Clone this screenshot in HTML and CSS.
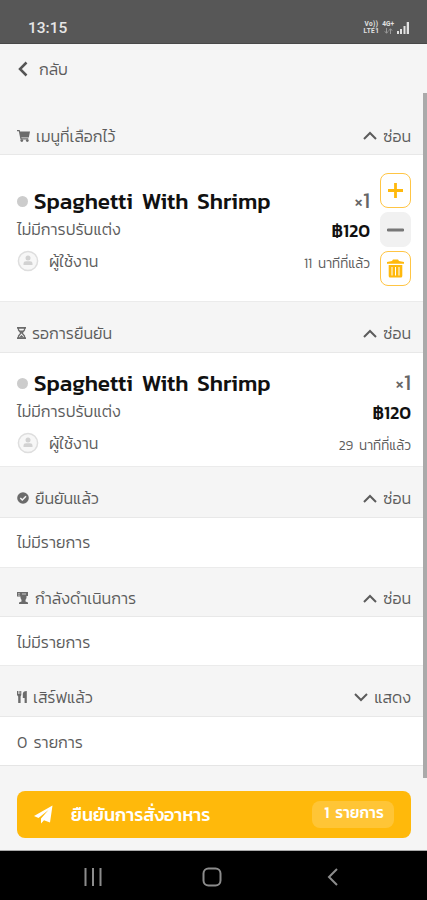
FILE: index.html
```html
<!DOCTYPE html>
<html lang="th">
<head>
<meta charset="utf-8">
<title>รายการอาหาร</title>
<link rel="stylesheet" href="styles.css">
</head>
<body>
<svg class="defs" aria-hidden="true">
  <symbol id="up" viewBox="0 0 14 9"><path d="M1 8 7 2l6 6" fill="none" stroke="currentColor" stroke-width="2"/></symbol>
  <symbol id="down" viewBox="0 0 14 9"><path d="m1 1 6 6 6-6" fill="none" stroke="currentColor" stroke-width="2"/></symbol>
  <symbol id="user" viewBox="0 0 22 22"><circle cx="11" cy="11" r="9.6" fill="#f7f7f7" stroke="#dedede" stroke-width="1.5"/><circle cx="11" cy="8" r="2.5" fill="#d2d2d2"/><path d="M6.5 15v-1.2c0-1.7 1-2.5 2.5-2.5h4c1.500 0 2.500.8 2.500 2.500V15z" fill="#d2d2d2"/></symbol>
</svg>
<div class="status">
  <span class="clock">13:15</span>
  <div class="signals">
    <span class="net volte"><b>Vo))</b><b>LTE1</b></span>
    <span class="net lte"><b>4G+</b><svg width="9" height="6" viewBox="0 0 9 6"><path d="M2.500 0v5M.8 3.300l1.700 2 1.700-2M6.500 6V1M4.800 2.700l1.700-2 1.700 2" fill="none" stroke="#999"/></svg></span>
    <svg width="12" height="12" viewBox="0 0 12 12"><path d="M0 12V9h2v3zM3 12V7h2v5zM6.500 12V4h2v8zM9.700 12V0H12v12z" fill="#e2e2e2"/></svg>
  </div>
</div>
<main class="page">
  <nav class="back">
    <svg width="11" height="16" viewBox="0 0 11 16"><path d="M9.500 1.500 3 8l6.500 6.500" fill="none" stroke="#555" stroke-width="2.500"/></svg>
    <span class="t-back">กลับ</span>
  </nav>

  <header class="head first">
    <svg class="ic" width="13" height="12" viewBox="0 0 13 12"><path d="M0 0h2.700l.4 1.500H13L11.800 7.500H4.300l.3.800h6.700v1.200H3.500L1.800 1.200H0z"/><circle cx="4.800" cy="10.600" r="1.400"/><circle cx="10.300" cy="10.600" r="1.400"/></svg>
    <span class="t-cart">เมนูที่เลือกไว้</span>
    <span class="toggle"><svg width="14" height="9"><use href="#up"/></svg><span class="t-hide">ซ่อน</span></span>
  </header>
  <section class="item editable">
    <div class="info">
      <div class="row name"><i class="dot"></i><h2>Spaghetti With Shrimp</h2><span class="qty"><small>×</small>1</span></div>
      <div class="row mid"><span class="t-mod">ไม่มีการปรับแต่ง</span><b class="price">฿120</b></div>
      <div class="row who"><svg width="22" height="22"><use href="#user"/></svg><span class="t-user">ผู้ใช้งาน</span><span class="ago t-ago1">11 นาทีที่แล้ว</span></div>
    </div>
    <div class="actions">
      <button><svg width="17" height="17" viewBox="0 0 17 17"><path d="M8.500 1v15M1 8.500h15" stroke="#ffb90d" stroke-width="2.800"/></svg></button>
      <button class="minus"><svg width="17" height="4" viewBox="0 0 17 4"><path d="M1 2h15" stroke="#777" stroke-width="2.800" stroke-linecap="round"/></svg></button>
      <button><svg width="17" height="19" viewBox="0 0 17 19"><path d="M0 3 5 2l1-1.500h5L12 2l5 1v1.800H0zM1.700 6h13.600v11q0 1.500-1.500 1.500H3.200Q1.700 18.500 1.700 17z" fill="#ffb90d"/><path d="M5 8v8.500M8.500 8v8.500M12 8v8.500" stroke="#fff" stroke-width="1"/></svg></button>
    </div>
  </section>

  <header class="head wait">
    <svg class="ic" width="9" height="12" viewBox="0 0 9 12"><path d="M0 0h9v1.700H0zM0 10.300h9V12H0z"/><path d="M1.500 1v2L4 6 1.500 9v2M7.500 1v2L5 6l2.500 3v2" fill="none" stroke="currentColor" stroke-width="1.300"/><path d="M2 3.500h5L4.500 6zM2 10.500 4.500 8 7 10.500z"/></svg>
    <span class="t-wait">รอการยืนยัน</span>
    <span class="toggle"><svg width="14" height="9"><use href="#up"/></svg><span class="t-hide">ซ่อน</span></span>
  </header>
  <section class="item">
    <div class="info">
      <div class="row name"><i class="dot"></i><h2>Spaghetti With Shrimp</h2><span class="qty"><small>×</small>1</span></div>
      <div class="row mid"><span class="t-mod">ไม่มีการปรับแต่ง</span><b class="price">฿120</b></div>
      <div class="row who"><svg width="22" height="22"><use href="#user"/></svg><span class="t-user">ผู้ใช้งาน</span><span class="ago t-ago2">29 นาทีที่แล้ว</span></div>
    </div>
  </section>

  <header class="head ok">
    <svg class="ic" width="12" height="12" viewBox="0 0 12 12"><circle cx="6" cy="6" r="5.800"/><path d="m3.300 6 2 2 3.700-3.700" fill="none" stroke="#f5f5f5" stroke-width="1.500"/></svg>
    <span class="t-ok">ยืนยันแล้ว</span>
    <span class="toggle"><svg width="14" height="9"><use href="#up"/></svg><span class="t-hide">ซ่อน</span></span>
  </header>
  <section class="empty e1"><span class="t-none">ไม่มีรายการ</span></section>

  <header class="head doing">
    <svg class="ic" width="12" height="12" viewBox="0 0 12 12"><path d="M0 0h11v4H9.500v2L8.500 8v1.500l2.500 1V12H2v-1.500l2.500-1V8L3.500 6V4.500H0z"/><path d="M1.200 1.700h1.500M1.200 3.200h1.500M5 2h4" stroke="#f5f5f5" stroke-width=".7"/></svg>
    <span class="t-doing">กำลังดำเนินการ</span>
    <span class="toggle"><svg width="14" height="9"><use href="#up"/></svg><span class="t-hide">ซ่อน</span></span>
  </header>
  <section class="empty e2"><span class="t-none">ไม่มีรายการ</span></section>

  <header class="head served">
    <svg class="ic" width="10" height="12" viewBox="0 0 10 12"><path d="M0 0h1v3h.6V0h1v3h.6V0h1.100v4L3.600 5.500V12H1.200V5.500L0 4zM9.800 0v12H7.600V7H5.800V3q0-3 4-3z"/></svg>
    <span class="t-served">เสิร์ฟแล้ว</span>
    <span class="toggle"><svg width="14" height="9"><use href="#down"/></svg><span class="t-show">แสดง</span></span>
  </header>
  <section class="empty e3"><span class="t-zero">0 รายการ</span></section>

  <footer class="foot">
    <div class="confirm">
      <svg width="19" height="19" viewBox="0 0 19 19"><path d="M18.500.5 0 11l4.500 2L14.500 5 7 13.500v5l3-3.300 6 2.300z" fill="#fff"/></svg>
      <span class="t-confirm">ยืนยันการสั่งอาหาร</span>
      <span class="pill"><span class="t-pill">1 รายการ</span></span>
    </div>
  </footer>
  <div class="scroll"></div>
</main>
<div class="keys">
  <svg width="18" height="18" viewBox="0 0 18 18"><path d="M1.500 0v18M9 0v18M16.500 0v18" stroke="#8c8c8c" stroke-width="2"/></svg>
  <svg width="20" height="20" viewBox="0 0 20 20"><rect x="1.500" y="1.500" width="17" height="17" rx="5" fill="none" stroke="#8c8c8c" stroke-width="2"/></svg>
  <svg width="11" height="18" viewBox="0 0 11 18"><path d="M10 1 2 9l8 8" fill="none" stroke="#8c8c8c" stroke-width="2"/></svg>
</div>
</body>
</html>
```
FILE: styles.css
```css
* { box-sizing: border-box; }
body {
  margin: 0; width: 427px; height: 900px; overflow: hidden;
  display: flex; flex-direction: column;
  background: #f5f5f5; color: #5c5c5c;
  font: 300 16px/20px "Kanit", "Prompt", "Noto Sans Thai", "Noto Sans", sans-serif;
}
span, h2, b { white-space: nowrap; }
svg { display: block; flex: none; }
.defs { position: absolute; width: 0; height: 0; }

.status {
  height: 44px; flex: none; display: flex; align-items: center; justify-content: space-between;
  padding: 12px 18px 0 28px; background: #575757; border-bottom: 1px solid #484848;
}
.clock { font: 500 15.5px/20px Roboto, sans-serif; color: #e6e6e6; }
.signals { display: flex; align-items: center; gap: 3px; }
.net { display: flex; flex-direction: column; align-items: center; gap: 1px; color: #e2e2e2; font: 700 6.5px/6px Roboto, sans-serif; }
.net b { font-weight: 700; }
.volte { letter-spacing: .4px; }

.page { position: relative; height: 807px; flex: none; display: flex; flex-direction: column; }
.back { height: 50px; flex: none; display: flex; align-items: center; gap: 11px; padding-left: 17px; }

.head {
  flex: none; display: flex; align-items: center; padding: 12px 16px 0 17px;
  border-bottom: 1px solid #e8e8e8; border-top: 1px solid #ebebeb;
}
.head .ic { margin-right: 6px; fill: #6b6b6b; color: #6b6b6b; }
.first { height: 61px; padding-top: 23px; border-top: 0; }
.wait { height: 52px; }
.ok { height: 52px; }
.doing { height: 50px; }
.served { height: 52px; }
.toggle { margin-left: auto; display: flex; align-items: center; gap: 6px; }

.item { flex: none; height: 113px; background: #fff; display: flex; padding: 15px 16px 0 17px; }
.editable { height: 146px; gap: 10px; padding-top: 18px; }
.info { flex: 1; }
.editable .info { padding-top: 13px; }
.row { display: flex; align-items: center; }
.name { height: 30px; }
.dot { width: 11px; height: 11px; border-radius: 50%; background: #ccc; margin-right: 6px; }
h2 { margin: 0; font-size: 22.5px; line-height: 30px; font-weight: 500; color: #111; word-spacing: 3.9px; }
.qty { margin-left: auto; font-size: 22px; font-weight: 400; color: #666; }
.qty small { font-size: 21px; }
.mid { height: 26px; }
.t-mod { margin-top: -1px; }
.price { margin-left: auto; font-size: 18px; line-height: 24px; font-weight: 500; color: #111; padding-top: 3px; }
.who { height: 38px; }
.who svg { margin-right: 10px; }
.ago { margin-left: auto; font-size: 13.5px; padding-top: 3px; word-spacing: 2.8px; }
.actions { display: flex; flex-direction: column; gap: 4px; }
button {
  width: 31px; height: 35px; padding: 0; display: grid; place-items: center;
  background: #fff; border: 1.5px solid #ffc544; border-radius: 8px;
}
.minus { background: #f1f1f1; border-color: #f1f1f1; }

.empty { flex: none; background: #fff; display: flex; align-items: center; padding: 0 0 0 17px; word-spacing: 2.5px; }
.e1 { height: 49px; padding-bottom: 1px; }
.e2 { height: 48px; padding-top: 1px; }
.e3 { height: 48px; padding-top: 1px; }

.foot { flex: 1; border-top: 1px solid #e5e5e5; padding: 25px 16px 0 17px; border-bottom: 1px solid #aaa; }
.confirm {
  height: 47px; display: flex; align-items: center; padding: 0 17px 0 17px;
  background: #ffb90b; border-radius: 8px; color: #fff;
}
.t-confirm { margin-left: 18px; font-size: 18px; font-weight: 500; }
.pill {
  margin-left: auto; width: 82px; height: 27px; display: grid; place-items: center;
  background: #ffc536; border-radius: 8px; font-weight: 500; font-size: 15.5px; word-spacing: 2.5px; padding: 0 0 3px 2px;
}
.scroll { position: absolute; right: 0; top: 49px; width: 4px; height: 685px; background: #aaa; }
.keys {
  height: 49px; flex: none; background: #000;
  display: flex; align-items: center; padding: 2px 89px 0 84px; justify-content: space-between;
}
.keys svg:nth-child(2) { margin-right: 5px; }
```
